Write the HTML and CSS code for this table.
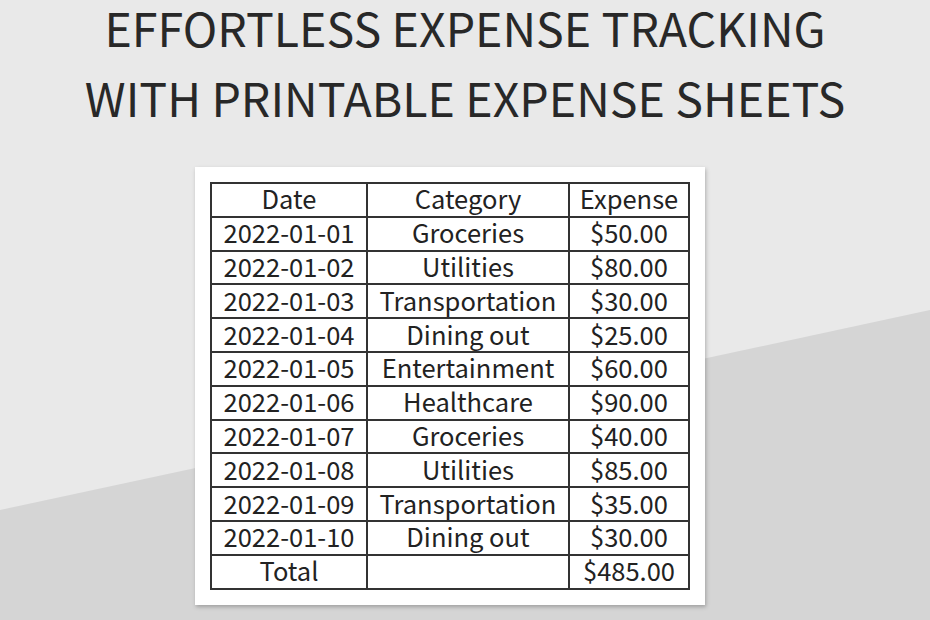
FILE: index.html
```html
<!DOCTYPE html>
<html lang="en">
<head>
<meta charset="utf-8">
<title>Effortless Expense Tracking</title>
<link rel="stylesheet" href="styles.css">
</head>
<body>
<div class="page">
  <h1 class="title"><span class="line">EFFORTLESS EXPENSE TRACKING</span><span class="line">WITH PRINTABLE EXPENSE SHEETS</span></h1>
  <div class="sheet">
    <table class="expenses">
      <colgroup><col class="c-date"><col class="c-cat"><col class="c-exp"></colgroup>
      <tr><td>Date</td><td>Category</td><td>Expense</td></tr>
      <tr><td>2022-01-01</td><td>Groceries</td><td>$50.00</td></tr>
      <tr><td>2022-01-02</td><td>Utilities</td><td>$80.00</td></tr>
      <tr><td>2022-01-03</td><td>Transportation</td><td>$30.00</td></tr>
      <tr><td>2022-01-04</td><td>Dining out</td><td>$25.00</td></tr>
      <tr><td>2022-01-05</td><td>Entertainment</td><td>$60.00</td></tr>
      <tr><td>2022-01-06</td><td>Healthcare</td><td>$90.00</td></tr>
      <tr><td>2022-01-07</td><td>Groceries</td><td>$40.00</td></tr>
      <tr><td>2022-01-08</td><td>Utilities</td><td>$85.00</td></tr>
      <tr><td>2022-01-09</td><td>Transportation</td><td>$35.00</td></tr>
      <tr><td>2022-01-10</td><td>Dining out</td><td>$30.00</td></tr>
      <tr><td>Total</td><td></td><td>$485.00</td></tr>
    </table>
  </div>
</div>
</body>
</html>
```
FILE: styles.css
```css
html, body {
  margin: 0;
  padding: 0;
}
body {
  width: 930px;
  height: 620px;
  overflow: hidden;
  background: #e9e9e9;
  font-family: "Noto Sans CJK SC", "Noto Sans", sans-serif;
  color: #222;
  position: relative;
}
body::before {
  content: "";
  position: absolute;
  inset: 0;
  background: #d5d5d5;
  clip-path: polygon(0 510px, 100% 310px, 100% 100%, 0 100%);
}
.page {
  position: relative;
  display: flex;
  flex-direction: column;
  align-items: center;
}
.title {
  margin: 0;
  display: flex;
  flex-direction: column;
  align-items: center;
  gap: 16px;
  font-weight: 400;
  font-size: 46.5px;
  line-height: 54px;
  color: #282828;
}
.line {
  display: block;
  white-space: nowrap;
}
.sheet {
  align-self: flex-start;
  margin: 43px 0 0 195px;
  background: #fff;
  padding: 15px;
  box-shadow: 1px 2px 4px rgba(0, 0, 0, 0.25);
}
.expenses {
  border-collapse: collapse;
  width: 478px;
  table-layout: fixed;
  font-size: 25.5px;
  color: #222;
}
.c-date { width: 156px; }
.c-cat { width: 202px; }
.c-exp { width: 120px; }
.expenses td {
  border: 2px solid #333;
  height: 28.8px;
  padding: 0 0 3px;
  text-align: center;
  line-height: 28px;
  white-space: nowrap;
}
```
